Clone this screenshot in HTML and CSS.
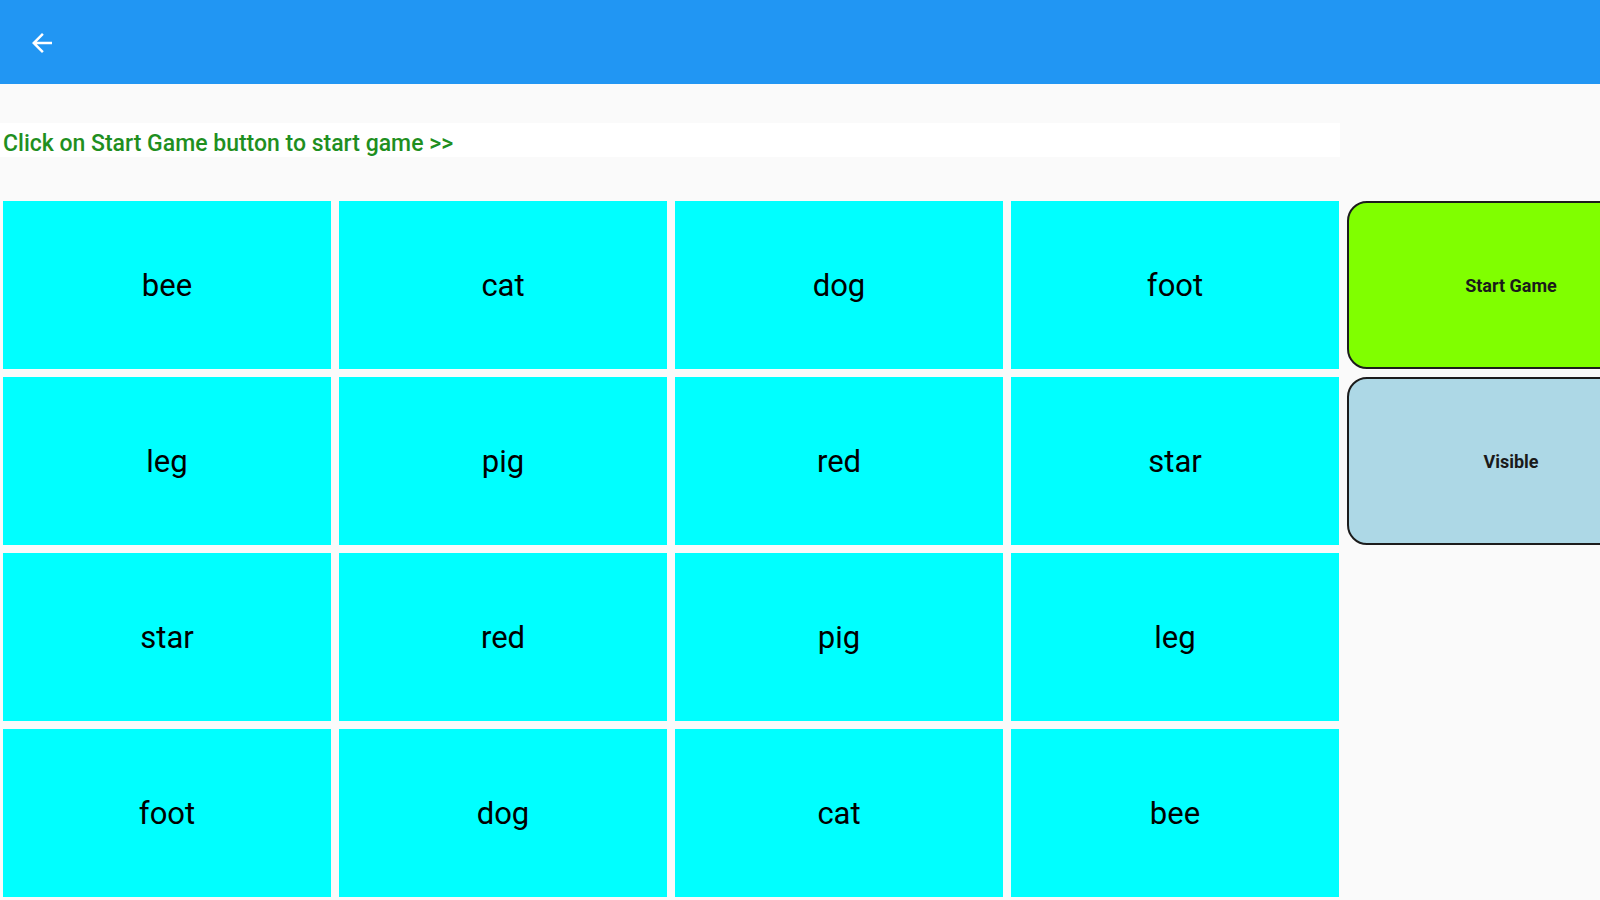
FILE: index.html
```html
<!DOCTYPE html>
<html>
<head>
<meta charset="utf-8">
<link rel="stylesheet" href="styles.css">
</head>
<body>
<header class="appbar">
  <svg class="back" viewBox="0 0 24 24" width="30" height="30"><path fill="#fff" d="M20 11H7.83l5.59-5.59L12 4l-8 8 8 8 1.41-1.41L7.83 13H20v-2z"/></svg>
</header>
<main class="content">
  <div class="hint">Click on Start Game button to start game &gt;&gt;</div>
  <div class="board">
    <div class="grid">
      <div class="tile">bee</div><div class="tile">cat</div><div class="tile">dog</div><div class="tile">foot</div>
      <div class="tile">leg</div><div class="tile">pig</div><div class="tile">red</div><div class="tile">star</div>
      <div class="tile">star</div><div class="tile">red</div><div class="tile">pig</div><div class="tile">leg</div>
      <div class="tile">foot</div><div class="tile">dog</div><div class="tile">cat</div><div class="tile">bee</div>
    </div>
    <div class="side">
      <div class="btn btn-start">Start Game</div>
      <div class="btn btn-visible">Visible</div>
    </div>
  </div>
</main>
</body>
</html>
```
FILE: styles.css
```css
html, body {
  margin: 0;
  padding: 0;
  width: 1600px;
  height: 900px;
  overflow: hidden;
  background: #fafafa;
  font-family: Roboto, "Liberation Sans", sans-serif;
}
.appbar {
  height: 84px;
  background: #2196f3;
  display: flex;
  align-items: center;
  padding-left: 27px;
  box-sizing: border-box;
}
.back {
  display: block;
  margin-top: 2px;
}
.content {
  padding-top: 39px;
}
.hint {
  width: 1340px;
  height: 34px;
  background: #ffffff;
  color: #1f8f1f;
  font-size: 23px;
  font-weight: 500;
  line-height: 41px;
  padding-left: 3px;
  box-sizing: border-box;
}
.board {
  display: flex;
  margin-top: 44px;
  gap: 8px;
}
.grid {
  display: grid;
  grid-template-columns: repeat(4, 328px);
  grid-auto-rows: 168px;
  gap: 8px;
  padding-left: 3px;
  flex: none;
}
.tile {
  background: #00ffff;
  display: flex;
  align-items: center;
  justify-content: center;
  font-size: 31px;
  color: #000;
}
.side {
  display: flex;
  flex-direction: column;
  gap: 8px;
  flex: none;
}
.btn {
  width: 328px;
  height: 168px;
  box-sizing: border-box;
  border: 2px solid #1c1c1c;
  border-radius: 20px;
  display: flex;
  align-items: center;
  justify-content: center;
  font-size: 18px;
  font-weight: 700;
  color: #1a1a1a;
}
.btn-start {
  background: #80ff00;
}
.btn-visible {
  background: #add8e6;
}
```
